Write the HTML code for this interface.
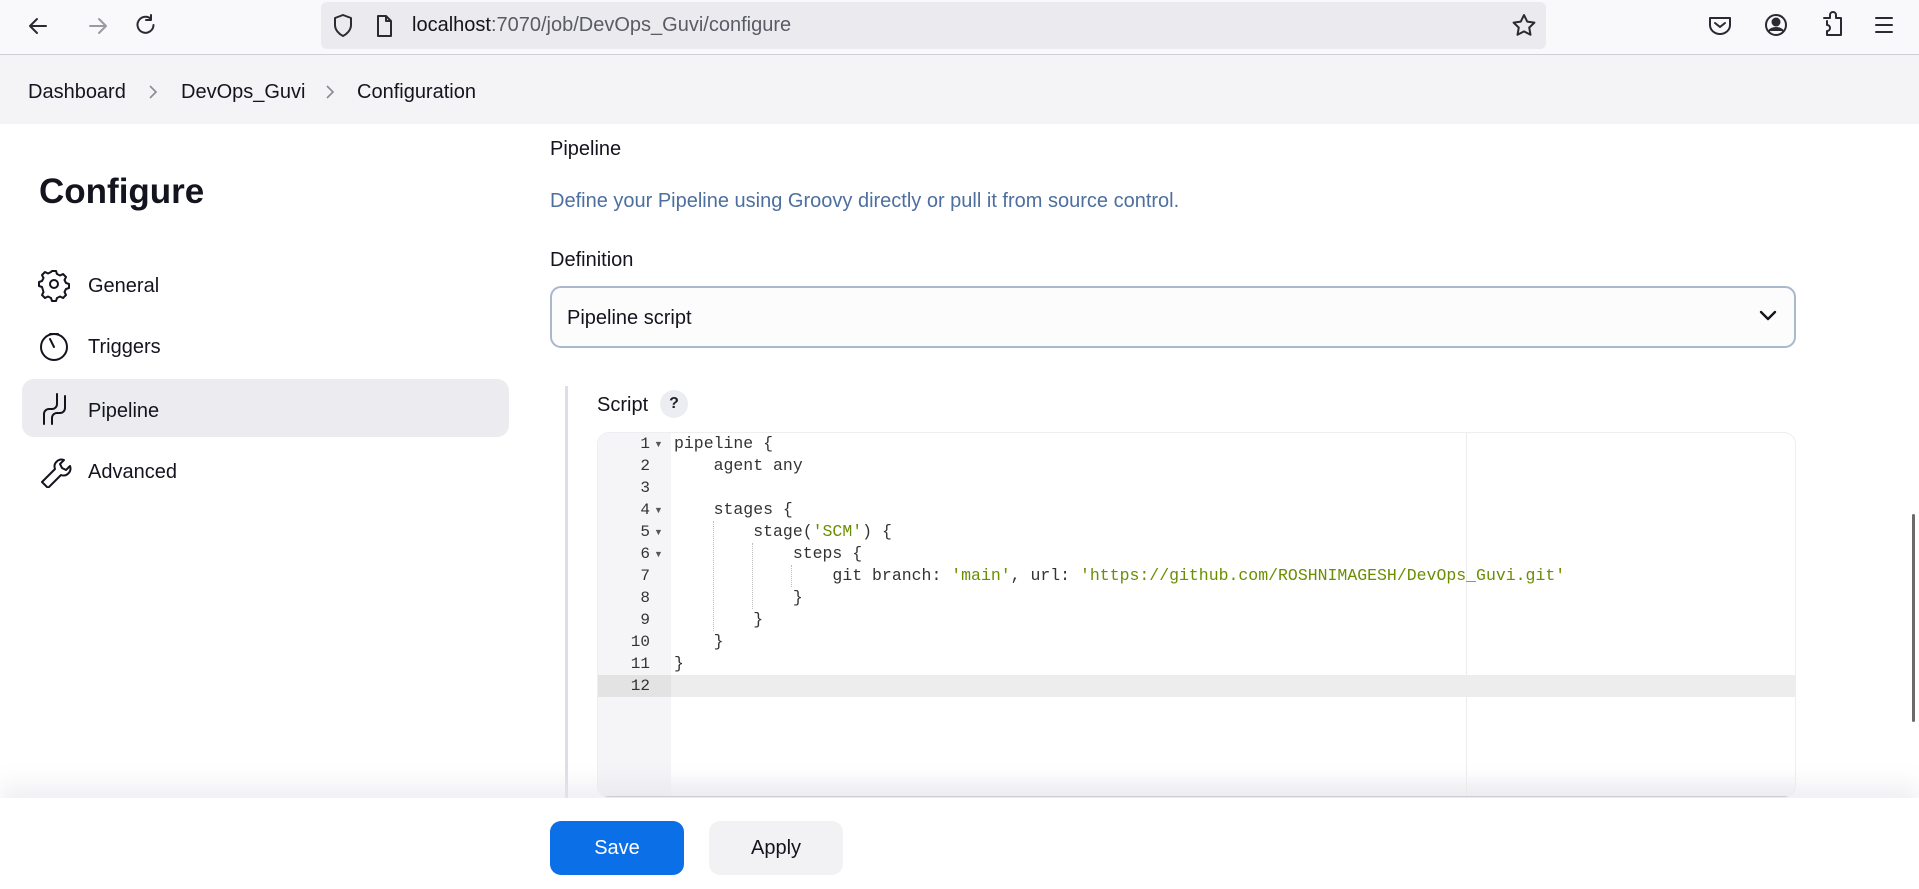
<!DOCTYPE html>
<html><head><meta charset="utf-8"><style>
*{box-sizing:border-box;margin:0;padding:0}
body{width:1919px;height:889px;overflow:hidden;background:#fff;font-family:"Liberation Sans",sans-serif;color:#1f1f24;position:relative}
.abs{position:absolute}
.tb{left:0;top:0;width:1919px;height:55px;background:#f9f9fb;border-bottom:1px solid #cfcfd8}
.url{left:321px;top:2px;width:1225px;height:47px;background:#ebebef;border-radius:6px}
.bc{left:0;top:55px;width:1919px;height:69px;background:#f4f4f6}
.bc span{position:absolute;top:26px;font-size:20px;color:#14141f}
.side{font-size:20px;color:#14141f}
.code{font-family:"Liberation Mono",monospace;font-size:16.5px;color:#333;line-height:22px;white-space:pre}
.ln{font-family:"Liberation Mono",monospace;font-size:16px;color:#333;line-height:22px;text-align:right}
.s{color:#6b8e00}
</style></head><body>
<div class="abs tb"></div>
<svg class="abs" style="left:24px;top:12px" width="140" height="28" viewBox="0 0 140 28" fill="none" stroke="#2b2a33" stroke-width="2" stroke-linecap="round" stroke-linejoin="round">
<path d="M22 14H6M13 7l-7 7 7 7"/>
<path d="M82 14H66M75 7l7 7-7 7" stroke="#9a9aa2"/>
<path d="M127 7a8 8 0 1 0 2.5 6M127 3v5h-5"/>
</svg>
<div class="abs url"></div>
<svg class="abs" style="left:331px;top:12px" width="70" height="28" viewBox="0 0 70 28" fill="none" stroke="#2b2a33" stroke-width="2" stroke-linejoin="round">
<path d="M12 3l8 3v7c0 5-4 9-8 11-4-2-8-6-8-11V6z"/>
<path d="M47 4h8l5 5v15H47zM55 4v5h5"/>
</svg>
<div class="abs" style="left:412px;top:14px;font-size:20px;color:#15141a">localhost<span style="color:#5b5b66">:7070/job/DevOps_Guvi/configure</span></div>
<svg class="abs" style="left:1510px;top:12px" width="28" height="28" viewBox="0 0 28 28" fill="none" stroke="#2b2a33" stroke-width="2" stroke-linejoin="round"><path d="M14 3l3.2 6.6 7.2 1-5.2 5 1.3 7.2L14 19.4l-6.5 3.4 1.3-7.2-5.2-5 7.2-1z"/></svg>
<svg class="abs" style="left:1706px;top:10px" width="200" height="30" viewBox="0 0 200 30" fill="none" stroke="#2b2a33" stroke-width="2" stroke-linecap="round" stroke-linejoin="round">
<path d="M4 8h20v7a10 9 0 0 1-20 0z"/><path d="M9 13l5 4 5-4"/>
<circle cx="70" cy="15" r="10"/><circle cx="70" cy="12" r="3.5" fill="#2b2a33"/><path d="M63 21c3-4 11-4 14 0" fill="#2b2a33"/>
<path d="M118 8h6V5a3 3 0 0 1 6 0v3h5v17h-14v-4a3 3 0 0 0 0-6v-4"/>
<path d="M170 8h16M170 15h16M170 22h16"/>
</svg>
<div class="abs bc">
<span style="left:28px">Dashboard</span>
<svg class="abs" style="left:146px;top:28px" width="14" height="18" viewBox="0 0 14 18" fill="none" stroke="#8a8a96" stroke-width="1.6"><path d="M4 3l6 6-6 6"/></svg>
<span style="left:181px">DevOps_Guvi</span>
<svg class="abs" style="left:323px;top:28px" width="14" height="18" viewBox="0 0 14 18" fill="none" stroke="#8a8a96" stroke-width="1.6"><path d="M4 3l6 6-6 6"/></svg>
<span style="left:357px">Configuration</span>
</div>
<div class="abs" style="left:39px;top:172px;font-size:35px;font-weight:bold;color:#14141f">Configure</div>
<div class="abs" style="left:22px;top:379px;width:487px;height:58px;background:#ebebf0;border-radius:12px"></div>
<svg class="abs" style="left:38px;top:268px" width="36" height="220" viewBox="0 0 36 220" fill="none" stroke="#14141f" stroke-width="2" stroke-linecap="round" stroke-linejoin="round">
<circle cx="16" cy="16" r="4"/><path d="M14 3h4l1 3 3 1.5 3-1.5 3 3-1.5 3 1.5 3 3 1v4l-3 1-1.5 3 1.5 3-3 3-3-1.5-3 1.5-1 3h-4l-1-3-3-1.5-3 1.5-3-3 1.5-3L4 19l-3-1v-4l3-1 1.5-3L4 7l3-3 3 1.5L13 4z"/>
<circle cx="16" cy="79" r="13"/><path d="M16 79l-4-8M12 66h8"/>
<path d="M6 156v-10a5 5 0 0 1 5-5h3a5 5 0 0 0 5-5v-10M14 156v-6a5 5 0 0 1 5-5h3a5 5 0 0 0 5-5v-12"/>
<path d="M4 214l13-13a7 7 0 0 1 9-9l-4 4 2 4 4 2 4-4a7 7 0 0 1-9 9L10 220z"/>
</svg>
<div class="abs side" style="left:88px;top:275px">General</div>
<div class="abs side" style="left:88px;top:336px">Triggers</div>
<div class="abs side" style="left:88px;top:400px">Pipeline</div>
<div class="abs side" style="left:88px;top:461px">Advanced</div>
<div class="abs" style="left:550px;top:138px;font-size:20px;color:#14141f">Pipeline</div>
<div class="abs" style="left:550px;top:190px;font-size:20px;color:#4d6fa0">Define your Pipeline using Groovy directly or pull it from source control.</div>
<div class="abs" style="left:550px;top:249px;font-size:20px;color:#14141f">Definition</div>
<div class="abs" style="left:550px;top:286px;width:1246px;height:62px;border:2.5px solid #aab8cc;border-radius:11px;background:#fcfcfd"></div>
<div class="abs" style="left:567px;top:307px;font-size:20px;color:#14141f">Pipeline script</div>
<svg class="abs" style="left:1756px;top:306px" width="24" height="20" viewBox="0 0 24 20" fill="none" stroke="#14141f" stroke-width="2.4" stroke-linecap="round" stroke-linejoin="round"><path d="M5 6l7 7 7-7"/></svg>
<div class="abs" style="left:565px;top:386px;width:3px;height:412px;background:#dcdfe6"></div>
<div class="abs" style="left:597px;top:394px;font-size:20px;color:#14141f">Script</div>
<div class="abs" style="left:660px;top:390px;width:28px;height:28px;border-radius:50%;background:#ebedf2;font-size:16px;font-weight:bold;text-align:center;line-height:28px">?</div>
<div class="abs" style="left:597px;top:432px;width:1199px;height:366px;border:1px solid #eeeef2;border-radius:12px;overflow:hidden;background:#fff">
<div class="abs" style="left:0;top:0;width:73px;height:366px;background:#f5f5f7"></div>
<div class="abs" style="left:0;top:242px;width:1199px;height:22px;background:#ededee"></div>
<div class="abs" style="left:0;top:242px;width:73px;height:22px;background:#e3e3e3"></div>
<div class="abs" style="left:868px;top:0;width:1px;height:366px;background:#ececec"></div>
<div class="abs ln" style="left:0;top:0;width:52px">1<br>2<br>3<br>4<br>5<br>6<br>7<br>8<br>9<br>10<br>11<br>12</div>
<div class="abs" style="left:56px;top:0;font-size:9px;color:#555;line-height:22px">▼<br><br><br>▼<br>▼<br>▼</div>
<div class="abs" style="left:115px;top:88px;width:0;height:110px;border-left:1px dotted #bbb"></div>
<div class="abs" style="left:154px;top:110px;width:0;height:66px;border-left:1px dotted #bbb"></div>
<div class="abs" style="left:193px;top:132px;width:0;height:22px;border-left:1px dotted #bbb"></div>
<div class="abs code" style="left:76px;top:0">pipeline {
    agent any

    stages {
        stage(<span class="s">'SCM'</span>) {
            steps {
                git branch: <span class="s">'main'</span>, url: <span class="s">'https://github.com/ROSHNIMAGESH/DevOps_Guvi.git'</span>
            }
        }
    }
}
</div>
<div class="abs" style="left:0;top:340px;width:1199px;height:26px;background:linear-gradient(rgba(255,255,255,0),rgba(240,240,243,0.8))"></div>
<div class="abs" style="left:0;top:363px;width:1199px;height:3px;background:#a9b0bb"></div>
</div>
<div class="abs" style="left:0;top:798px;width:1919px;height:91px;background:#fff;box-shadow:0 -14px 20px rgba(230,230,236,0.6)"></div>
<div class="abs" style="left:550px;top:821px;width:134px;height:54px;background:#0b6fe8;border-radius:11px;color:#fff;font-size:20px;text-align:center;line-height:54px">Save</div>
<div class="abs" style="left:709px;top:821px;width:134px;height:54px;background:#f2f2f4;border-radius:11px;color:#14141f;font-size:20px;text-align:center;line-height:54px">Apply</div>
<div class="abs" style="left:1912px;top:514px;width:3px;height:208px;background:#6b6b6b;border-radius:2px"></div>
</body></html>
